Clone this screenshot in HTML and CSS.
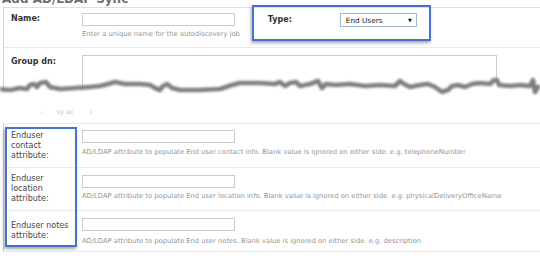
FILE: index.html
```html
<!DOCTYPE html>
<html>
<head>
<meta charset="utf-8">
<link rel="stylesheet" href="styles.css">
</head>
<body>
<div class="page">
  <div class="title">Add AD/LDAP Sync</div>
  <div class="form">
    <div class="row row-name">
      <div class="label bold">Name:</div>
      <div class="field">
        <div class="input"></div>
        <div class="hint">Enter a unique name for the autodiscovery job</div>
      </div>
      <div class="type-group">
        <div class="label-type bold">Type:</div>
        <div class="select"><span>End Users</span><span class="arrow">▼</span></div>
      </div>
    </div>
    <div class="row row-group">
      <div class="group-top">
        <div class="label bold label-group">Group dn:</div>
        <div class="field field-group">
          <div class="textarea"></div>
        </div>
      </div>
      <div class="remnant"><span class="r1">-</span><span class="r2">sy ac</span><span class="r3">ı</span></div>
    </div>
    <div class="row row-attr row-contact">
      <div class="label">Enduser contact attribute:</div>
      <div class="field">
        <div class="input"></div>
        <div class="hint h-contact">AD/LDAP attribute to populate End user contact info. Blank value is ignored on either side. e.g. telephoneNumber</div>
      </div>
    </div>
    <div class="row row-attr row-location">
      <div class="label">Enduser location attribute:</div>
      <div class="field">
        <div class="input"></div>
        <div class="hint h-location">AD/LDAP attribute to populate End user location info. Blank value is ignored on either side. e.g. physicalDeliveryOfficeName</div>
      </div>
    </div>
    <div class="row row-attr row-notes">
      <div class="label">Enduser notes attribute:</div>
      <div class="field">
        <div class="input"></div>
        <div class="hint h-notes">AD/LDAP attribute to populate End user notes. Blank value is ignored on either side. e.g. description</div>
      </div>
    </div>
  </div>

  <svg class="tear" width="540" height="47" viewBox="0 0 540 47">
    <defs>
      <filter id="blur" x="-5%" y="-50%" width="110%" height="200%">
        <feGaussianBlur stdDeviation="0.9"/>
      </filter>
    </defs>
    <path fill="#ffffff" d="M0,16 L10,17 L20,15 L27,16 L30,12 L34,11 L37,14 L40,10 L46,9 L50,14 L60,16 L75,15 L90,14 L100,13 L108,11 L115,9 L125,11 L140,11 L150,12 L155,15 L160,17 L163,13 L167,11 L172,15 L180,17 L200,17 L220,16 L232,12 L240,10 L260,10 L275,11 L280,9 L285,13 L290,10 L296,9 L300,13 L310,11 L318,8 L322,15 L326,11 L335,12 L350,11 L365,13 L380,12 L395,13 L400,8 L404,11 L410,14 L420,12 L428,11 L435,14 L442,19 L448,17 L452,13 L458,12 L465,14 L472,11 L480,10 L490,11 L494,7 L497,7 L499,12 L510,13 L520,12 L530,13 L533,7 L535,19 L538,14 L540,15 L540,47 L0,47 Z"/>
    <path fill="none" stroke="#808080" stroke-width="4.6" stroke-linejoin="round" filter="url(#blur)" d="M0,13 L10,14 L20,12 L27,13 L30,9 L34,8 L37,11 L40,7 L46,6 L50,11 L60,13 L75,12 L90,11 L100,10 L108,8 L115,6 L125,8 L140,8 L150,9 L155,12 L160,14 L163,10 L167,8 L172,12 L180,14 L200,14 L220,13 L232,9 L240,7 L260,7 L275,8 L280,6 L285,10 L290,7 L296,6 L300,10 L310,8 L318,5 L322,12 L326,8 L335,9 L350,8 L365,10 L380,9 L395,10 L400,5 L404,8 L410,11 L420,9 L428,8 L435,11 L442,16 L448,14 L452,10 L458,9 L465,11 L472,8 L480,7 L490,8 L494,4 L497,4 L499,9 L510,10 L520,9 L530,10 L533,4 L535,16 L538,11 L540,12"/>
  </svg>

  <div class="annot annot-type"></div>
  <div class="annot annot-enduser"></div>
</div>
</body>
</html>
```
FILE: styles.css
```css
html, body {
  margin: 0;
  padding: 0;
  background: #ffffff;
}

body {
  font-family: "DejaVu Sans", Verdana, sans-serif;
  color: #333333;
  overflow: hidden;
}

.page {
  position: relative;
  display: flow-root;
  width: 540px;
  height: 258px;
}

.title {
  margin: -7px 0 0 2px;
  height: 13px;
  line-height: 12px;
  font-size: 12px;
  font-weight: bold;
  color: #6f6f6f;
  white-space: nowrap;
}

.form {
  margin: 1px 0 0 3px;
  border-top: 1px solid #dedede;
  border-left: 1px solid #d2d2d2;
}

.row {
  display: flex;
  border-bottom: 1px solid #ebebeb;
}

.bold {
  font-weight: bold;
  color: #333333;
}

.label {
  box-sizing: border-box;
  width: 78px;
  flex: none;
  padding: 0 11px 0 7px;
  font-size: 8px;
  line-height: 10px;
  color: #474747;
}

.label.bold {
  color: #333333;
}

.field {
  flex: none;
}

.input {
  box-sizing: border-box;
  width: 153px;
  height: 13px;
  border: 1px solid #cccccc;
  background: #ffffff;
}

.hint {
  font-size: 6.75px;
  line-height: 8px;
  color: #959595;
  white-space: nowrap;
}

/* Row 1 */
.row-name {
  height: 39px;
}

.row-name .label {
  padding-top: 6px;
}

.row-name .field {
  padding-top: 5px;
}

.row-name .hint {
  margin-top: 4px;
}

.type-group {
  display: flex;
  margin-left: 28px;
}

.label-type {
  width: 72px;
  font-size: 8px;
  line-height: 10px;
  padding-top: 7px;
}

.select {
  box-sizing: border-box;
  margin-top: 5px;
  width: 77px;
  height: 14px;
  border: 1px solid #a7b6cf;
  display: flex;
  align-items: center;
  justify-content: space-between;
  padding: 0 4px 0 5px;
  font-size: 7.3px;
  color: #1a1a1a;
}

.select .arrow {
  font-size: 5px;
  color: #111111;
}

/* Row 2 */
.row-group {
  flex-direction: column;
  height: 75px;
}

.group-top {
  display: flex;
  height: 56px;
}

.label-group {
  padding-top: 9px;
}

.field-group {
  padding-top: 7px;
}

.textarea {
  box-sizing: border-box;
  width: 415px;
  height: 45px;
  border: 1px solid #cccccc;
}

.remnant {
  position: relative;
  z-index: 2;
  margin-top: 4px;
  padding-left: 36px;
  font-size: 6.75px;
  line-height: 8px;
  color: #c4c4c4;
  white-space: nowrap;
}

.remnant .r1 {
  color: #e8c3a0;
}

.remnant .r2 {
  margin-left: 14px;
}

.remnant .r3 {
  margin-left: 16px;
}

/* Attribute rows */
.row-attr {
  align-items: flex-start;
}

.row-attr .label {
  align-self: center;
}

.row-contact {
  height: 43px;
}

.row-contact .field {
  padding-top: 6px;
}

.h-contact {
  margin-top: 5px;
}

.row-location {
  height: 42px;
}

.row-location .field {
  padding-top: 7px;
}

.h-location {
  margin-top: 4px;
}

.row-notes {
  height: 40px;
}

.row-notes .field {
  padding-top: 7px;
}

.h-notes {
  margin-top: 6px;
}

/* Overlays */
.tear {
  position: absolute;
  left: 0;
  top: 76px;
  z-index: 1;
}

.annot {
  position: absolute;
  box-sizing: border-box;
  border: 2px solid #4673c6;
  box-shadow: -1px 2px 3px rgba(0, 0, 0, 0.35);
  z-index: 3;
}

.annot-type {
  left: 252px;
  top: 5px;
  width: 179px;
  height: 36px;
}

.annot-enduser {
  left: 5px;
  top: 127px;
  width: 72px;
  height: 120px;
}
```
